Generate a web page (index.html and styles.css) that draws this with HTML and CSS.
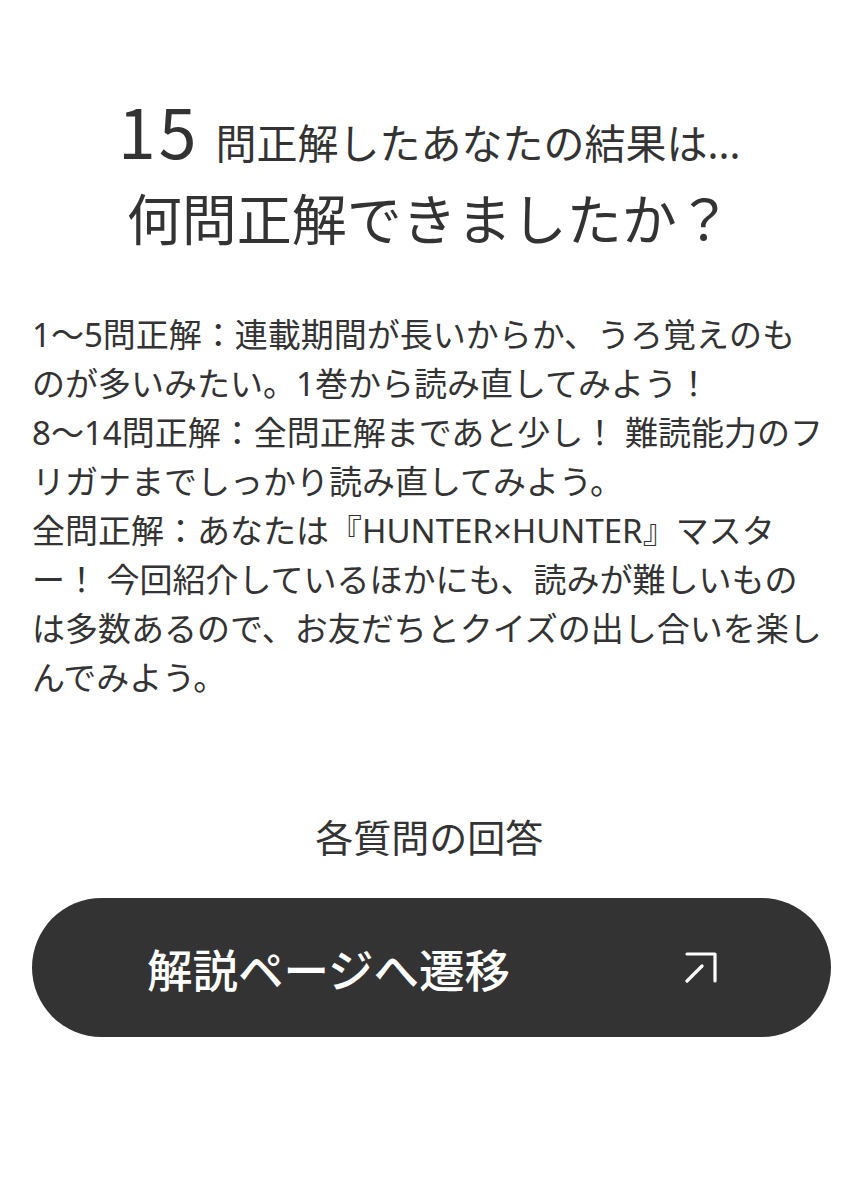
FILE: index.html
```html
<!doctype html>
<html lang="ja">

<head>
  <meta charset="UTF-8">
  <meta name="viewport" content="width=device-width, initial-scale=1.0">
  <title>結果</title>
  <link rel="stylesheet" href="styles.css">
</head>

<body>
  <main class="result">
    <h1 class="result-title">
      <span class="score"><span class="score-num">15</span>問正解したあなたの結果は...</span>
      <span class="question">何問正解できましたか？</span>
    </h1>

    <div class="comment">
      <p>1〜5問正解：連載期間が長いからか、うろ覚えのものが多いみたい。1巻から読み直してみよう！</p>
      <p>8〜14問正解：全問正解まであと少し！ 難読能力のフリガナまでしっかり読み直してみよう。</p>
      <p>全問正解：あなたは『HUNTER×HUNTER』マスター！ 今回紹介しているほかにも、読みが難しいものは多数あるので、お友だちとクイズの出し合いを楽しんでみよう。</p>
    </div>

    <h2 class="answers">各質問の回答</h2>

    <a class="btn" href="#">
      <span>解説ページへ遷移</span>
      <svg class="btn-icon" width="32" height="32" viewBox="0 0 32 32" fill="none" stroke="#fff"
        stroke-width="3.2" stroke-linecap="round" stroke-linejoin="round">
        <path d="M2 2 H30 V29" />
        <path d="M2 29 L17 14" />
      </svg>
    </a>
  </main>
</body>

</html>
```

FILE: styles.css
```css
* {
  box-sizing: border-box;
}

body {
  margin: 0;
  background: #fff;
  color: #333;
  font-family: "Noto Sans", "Noto Sans CJK JP", sans-serif;
}

.result {
  padding: 96px 36.5px 120px 32px;
}

.result-title {
  margin: 0;
  font-weight: 400;
  text-align: center;
}

.score {
  display: block;
  font-size: 41px;
  line-height: 70px;
}

.score-num {
  font-family: "Noto Sans CJK JP", sans-serif;
  font-size: 68px;
  line-height: 1;
  letter-spacing: 3px;
  margin-right: 16px;
}

.question {
  display: block;
  margin-top: 6px;
  font-size: 55px;
  line-height: 70px;
  font-weight: 400;
}

.comment {
  margin-top: 56px;
  font-size: 33px;
  line-height: 49px;
}

.comment p {
  margin: 0;
}

.answers {
  margin: 105px 0 0;
  font-size: 38px;
  line-height: 60px;
  font-weight: 400;
  text-align: center;
}

.btn {
  display: flex;
  align-items: center;
  justify-content: space-between;
  height: 139px;
  margin: 31px -4.5px 0 0;
  padding: 0 114px 0 115px;
  border-radius: 70px;
  background: #333;
  color: #fff;
  font-size: 45.5px;
  font-weight: 500;
  text-decoration: none;
}

.btn-icon {
  display: block;
}
```
